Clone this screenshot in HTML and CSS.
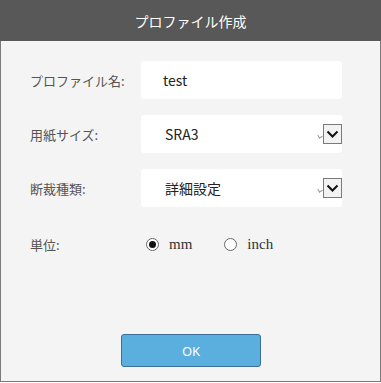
FILE: index.html
```html
<!DOCTYPE html>
<html lang="ja">
<head>
  <meta charset="UTF-8" />
  <title>プロファイル作成</title>
  <link rel="stylesheet" href="styles.css">
</head>
<body>

  <div class="dialog">
    <div class="dialog-header">プロファイル作成</div>

    <div class="dialog-body">
      <div class="form">
        <label class="form-label">プロファイル名:</label>
        <div class="field">test</div>

        <label class="form-label">用紙サイズ:</label>
        <div class="field select">
          <span>SRA3</span>
          <span class="select-arrow">
            <svg width="19" height="20" viewBox="0 0 19 20">
              <rect x="0.5" y="0.5" width="18" height="19" fill="#f2f2f2" stroke="#7a7a7a"/>
              <path d="M4.5 7.5 L9.5 12.5 L14.5 7.5" fill="none" stroke="#111" stroke-width="2"/>
            </svg>
          </span>
        </div>

        <label class="form-label">断裁種類:</label>
        <div class="field select">
          <span>詳細設定</span>
          <span class="select-arrow">
            <svg width="19" height="20" viewBox="0 0 19 20">
              <rect x="0.5" y="0.5" width="18" height="19" fill="#f2f2f2" stroke="#7a7a7a"/>
              <path d="M4.5 7.5 L9.5 12.5 L14.5 7.5" fill="none" stroke="#111" stroke-width="2"/>
            </svg>
          </span>
        </div>

        <label class="form-label unit-label">単位:</label>
        <div class="radios">
          <label class="radio"><span class="dot checked"></span>mm</label>
          <label class="radio"><span class="dot"></span>inch</label>
        </div>
      </div>

      <div class="actions">
        <button class="ok-btn">OK</button>
      </div>
    </div>
  </div>

</body>
</html>
```

FILE: styles.css
```css
body {
  margin: 0;
  background: #fff;
  font-family: "Noto Sans CJK JP", "Noto Sans", sans-serif;
}

.dialog {
  width: 381px;
  height: 382px;
  box-sizing: border-box;
  border: 1px solid #7a7a7a;
  border-top: none;
  background: #f4f4f4;
  display: flex;
  flex-direction: column;
}

.dialog-header {
  height: 41px;
  margin: 0 -1px;
  background: #585858;
  color: #fff;
  font-size: 14px;
  display: flex;
  align-items: center;
  justify-content: center;
}

.dialog-body {
  flex: 1;
  display: flex;
  flex-direction: column;
  padding: 20px 38px 0 29px;
}

.form {
  display: grid;
  grid-template-columns: 111px 1fr;
  grid-auto-rows: 38px;
  row-gap: 16px;
  align-items: center;
}

.form-label {
  font-size: 13px;
  color: #555;
}

.field {
  height: 38px;
  box-sizing: border-box;
  background: #fff;
  border-radius: 3px;
  padding-left: 22px;
  display: flex;
  align-items: center;
  font-size: 14px;
  color: #222;
}

.select {
  padding-left: 24px;
  justify-content: space-between;
}

.select-arrow {
  display: flex;
  align-items: center;
  position: relative;
}

.select-arrow::before {
  content: "";
  width: 3px;
  height: 3px;
  border-left: 1px solid #999;
  border-bottom: 1px solid #999;
  transform: rotate(-30deg);
  margin: 4px 1px 0 0;
}

.unit-label {
  margin-top: 4px;
}

.radios {
  margin-top: 4px;
  padding-left: 5px;
  display: flex;
  gap: 32px;
}

.radio {
  display: flex;
  align-items: center;
  font-family: "Liberation Serif", serif;
  font-size: 15px;
  color: #333;
}

.dot {
  width: 13px;
  height: 13px;
  box-sizing: border-box;
  border: 1px solid #666;
  border-radius: 50%;
  background: #fff;
  margin-right: 10px;
  position: relative;
}

.dot.checked::after {
  content: "";
  position: absolute;
  left: 2px;
  top: 2px;
  width: 7px;
  height: 7px;
  border-radius: 50%;
  background: #111;
}

.actions {
  display: flex;
  justify-content: center;
  margin-top: 73px;
  padding-left: 10px;
}

.ok-btn {
  width: 140px;
  height: 33px;
  background: #5aafdf;
  border: 1px solid #3b6f99;
  border-radius: 3px;
  color: #fff;
  font-family: "Noto Sans", sans-serif;
  font-size: 13px;
}
```
